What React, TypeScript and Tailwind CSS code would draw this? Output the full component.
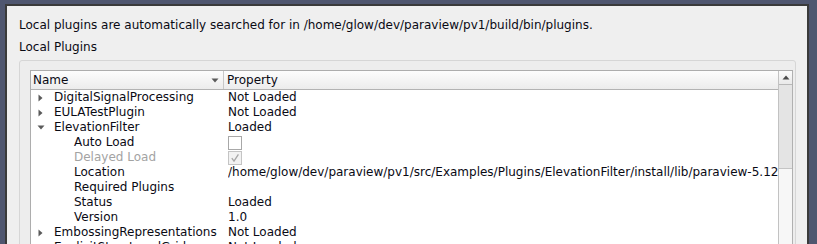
import React from "react";

type Row = {
  name: string;
  value?: string;
  level: 0 | 1;
  arrow?: "right" | "down";
  disabled?: boolean;
  check?: "empty" | "checked";
};

const rows: Row[] = [
  { name: "DigitalSignalProcessing", value: "Not Loaded", level: 0, arrow: "right" },
  { name: "EULATestPlugin", value: "Not Loaded", level: 0, arrow: "right" },
  { name: "ElevationFilter", value: "Loaded", level: 0, arrow: "down" },
  { name: "Auto Load", level: 1, check: "empty" },
  { name: "Delayed Load", level: 1, check: "checked", disabled: true },
  {
    name: "Location",
    value: "/home/glow/dev/paraview/pv1/src/Examples/Plugins/ElevationFilter/install/lib/paraview-5.12/plugins/ElevationFilter",
    level: 1,
  },
  { name: "Required Plugins", value: "", level: 1 },
  { name: "Status", value: "Loaded", level: 1 },
  { name: "Version", value: "1.0", level: 1 },
  { name: "EmbossingRepresentations", value: "Not Loaded", level: 0, arrow: "right" },
  { name: "ExplicitStructuredGrid", value: "Not Loaded", level: 0, arrow: "right" },
];

function Arrow({ dir }: { dir: "right" | "down" }) {
  if (dir === "right") {
    return (
      <svg width="5" height="8" viewBox="0 0 5 8" className="block ml-[1px]">
        <path d="M0.5 0.5 L4.5 4 L0.5 7.5 Z" fill="#5a5a5a" />
      </svg>
    );
  }
  return (
    <svg width="8" height="5" viewBox="0 0 8 5" className="block">
      <path d="M0.5 0.5 L7.5 0.5 L4 4.5 Z" fill="#5a5a5a" />
    </svg>
  );
}

function Check({ kind }: { kind: "empty" | "checked" }) {
  if (kind === "empty") {
    return <div className="w-[14px] h-[14px] border border-[#a8a8a8] bg-white" />;
  }
  return (
    <div className="w-[14px] h-[14px] border border-[#c4c4c4] bg-[#f2f2f2] flex items-center justify-center">
      <svg width="10" height="10" viewBox="0 0 10 10">
        <path d="M1.8 5.2 L4 8.2 L8.4 1.4" fill="none" stroke="#a6a6a6" strokeWidth="1.3" />
      </svg>
    </div>
  );
}

export default function App() {
  return (
    <div
      className="w-[817px] h-[244px] overflow-hidden bg-[#4f566f] pt-[4px] pl-[5px]"
      style={{ fontFamily: '"DejaVu Sans", sans-serif' }}
    >
      <div className="w-[804px] h-[260px] border-2 border-b-0 border-[#3a3a3a] bg-[#efefef] text-[12px] text-[#0a0a14]">
        <div className="pl-[12px] pt-[12px] leading-[15px]">
          Local plugins are automatically searched for in /home/glow/dev/paraview/pv1/build/bin/plugins.
        </div>
        <div className="pl-[12px] pt-[7px] leading-[15px]">Local Plugins</div>
        <div className="ml-[12px] mt-[5px] w-[777px] h-[200px] border border-[#d6d6d6] rounded-[3px] pl-[10px] pt-[9px] bg-[#ededed]">
          <div className="flex w-[763px] h-[190px] border-l border-t border-[#adadad] bg-white">
            <div className="flex-1 min-w-0 flex flex-col">
              <div className="flex h-[19px] border-b border-[#b3b3b3] bg-gradient-to-b from-[#fdfdfd] to-[#ececec] leading-[18px]">
                <div className="w-[193px] flex items-center pl-[2px] pr-[4px] border-r border-[#c8c8c8]">
                  <span className="flex-1">Name</span>
                  <svg width="8" height="5" viewBox="0 0 8 5" className="block">
                    <path d="M0.5 0.5 L7.5 0.5 L4 4.5 Z" fill="#5a5a5a" />
                  </svg>
                </div>
                <div className="pl-[3px]">Property</div>
              </div>
              {rows.map((r, i) => (
                <div key={i} className="flex h-[15px] leading-[15px] whitespace-nowrap">
                  <div className="w-[197px] flex items-center shrink-0">
                    <div className="w-[23px] flex items-center justify-start pl-[6px]">
                      {r.arrow ? <Arrow dir={r.arrow} /> : null}
                    </div>
                    <span className={`${r.level === 1 ? "pl-[20px]" : ""} ${r.disabled ? "text-[#a3a3a3]" : ""}`}>
                      {r.name}
                    </span>
                  </div>
                  <div className="flex-1 min-w-0 overflow-hidden flex items-center">
                    {r.check ? <Check kind={r.check} /> : <span>{r.value}</span>}
                  </div>
                </div>
              ))}
            </div>
            <div className="w-[15px] flex flex-col border-r border-[#b0b0b0] border-l border-l-[#c2c2c2]">
              <div className="h-[14px] border-b border-[#b8b8b8] bg-gradient-to-b from-[#fbfbfb] to-[#e9e9e9] flex items-center justify-center">
                <svg width="8" height="5" viewBox="0 0 8 5" className="block">
                  <path d="M0.5 4.5 L7.5 4.5 L4 0.5 Z" fill="#4a4a4a" />
                </svg>
              </div>
              <div className="h-[84px] bg-[#e4e4e4] border-b border-[#c4c4c4]" />
              <div className="flex-1 bg-[#f7f7f7]" />
            </div>
          </div>
        </div>
      </div>
    </div>
  );
}
